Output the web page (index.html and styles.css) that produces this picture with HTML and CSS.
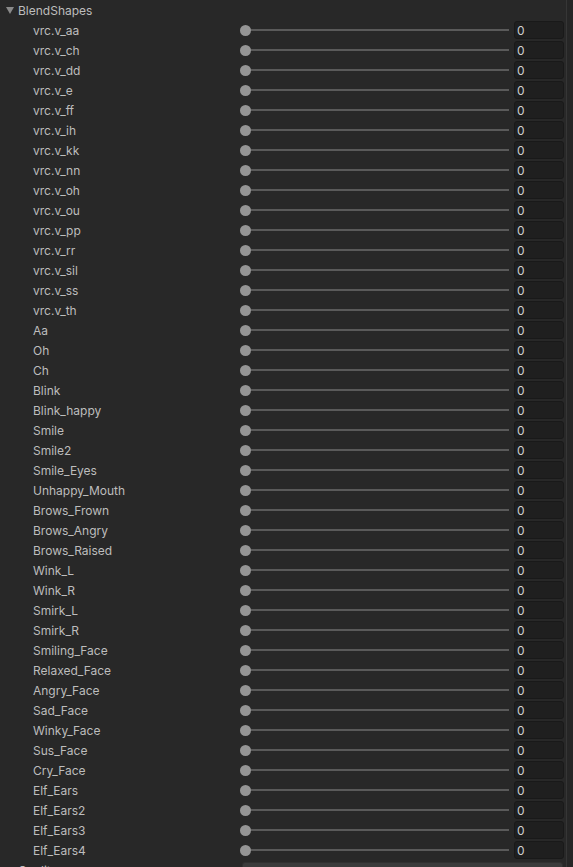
FILE: index.html
```html
<!DOCTYPE html>
<html>
<head>
<meta charset="utf-8">
<link rel="stylesheet" href="styles.css">
</head>
<body>
<div class="page">
  <div class="panel">
    <div class="header">
      <svg class="fold" width="8" height="8" viewBox="0 0 8 8"><path d="M0 1 L8 1 L4 8 Z" fill="#8a8a8a"/></svg>
      <span>BlendShapes</span>
    </div>
    <div id="rows"></div>
    <div class="row top">
      <div class="label">Quality</div>
      <div class="dropdown">Auto</div>
    </div>
  </div>
  <div class="gutter"></div>
</div>
<script>
var names = ["vrc.v_aa","vrc.v_ch","vrc.v_dd","vrc.v_e","vrc.v_ff","vrc.v_ih","vrc.v_kk","vrc.v_nn","vrc.v_oh","vrc.v_ou","vrc.v_pp","vrc.v_rr","vrc.v_sil","vrc.v_ss","vrc.v_th","Aa","Oh","Ch","Blink","Blink_happy","Smile","Smile2","Smile_Eyes","Unhappy_Mouth","Brows_Frown","Brows_Angry","Brows_Raised","Wink_L","Wink_R","Smirk_L","Smirk_R","Smiling_Face","Relaxed_Face","Angry_Face","Sad_Face","Winky_Face","Sus_Face","Cry_Face","Elf_Ears","Elf_Ears2","Elf_Ears3","Elf_Ears4"];
var html = "";
names.forEach(function(n){
  html += '<div class="row"><div class="label">' + n + '</div><div class="slider"><div class="knob"></div><div class="track"></div></div><div class="field">0</div></div>';
});
document.getElementById("rows").innerHTML = html;
</script>
</body>
</html>
```
FILE: styles.css
```css
html, body {
  margin: 0;
  padding: 0;
  background: #282828;
}
body {
  font-family: Inter, "Noto Sans", sans-serif;
  font-size: 12px;
  color: #bdbdbd;
  width: 573px;
  height: 867px;
  overflow: hidden;
}
.page {
  display: flex;
  width: 573px;
}
.panel {
  width: 566px;
  flex: none;
}
.gutter {
  flex: none;
  width: 6px;
  border-left: 1px solid #363636;
  background: #262626;
  height: 867px;
}
.header {
  height: 20px;
  display: flex;
  align-items: center;
  padding-left: 6px;
}
.fold {
  margin-right: 4px;
}
.row {
  height: 20px;
  display: flex;
  align-items: center;
}
.label {
  width: 207px;
  padding-left: 33px;
  padding-top: 2px;
  height: 20px;
  box-sizing: content-box;
  flex: none;
  line-height: 18px;
  white-space: nowrap;
}
.row .label {
  height: 18px;
}
.slider {
  width: 269px;
  flex: none;
  display: flex;
  align-items: center;
}
.knob {
  width: 11px;
  height: 11px;
  border-radius: 50%;
  background: #959595;
  flex: none;
  position: relative;
  z-index: 1;
}
.track {
  flex: 1;
  height: 2px;
  background: #5a5a5a;
  margin-left: -6px;
}
.field {
  margin-left: 5px;
  width: 48px;
  height: 16px;
  border: 1px solid #191919;
  background: #1f1f1f;
  border-radius: 3px;
  flex: none;
  line-height: 17px;
  text-indent: 2px;
  color: #cfcfcf;
  box-sizing: content-box;
}
.row.top .label {
  padding-left: 18px;
  width: 224px;
}
.dropdown {
  margin-top: 4px;
  height: 18px;
  width: 313px;
  padding-left: 6px;
  background: #3b3b3b;
  border: 1px solid #303030;
  border-radius: 3px;
  line-height: 18px;
}
```
